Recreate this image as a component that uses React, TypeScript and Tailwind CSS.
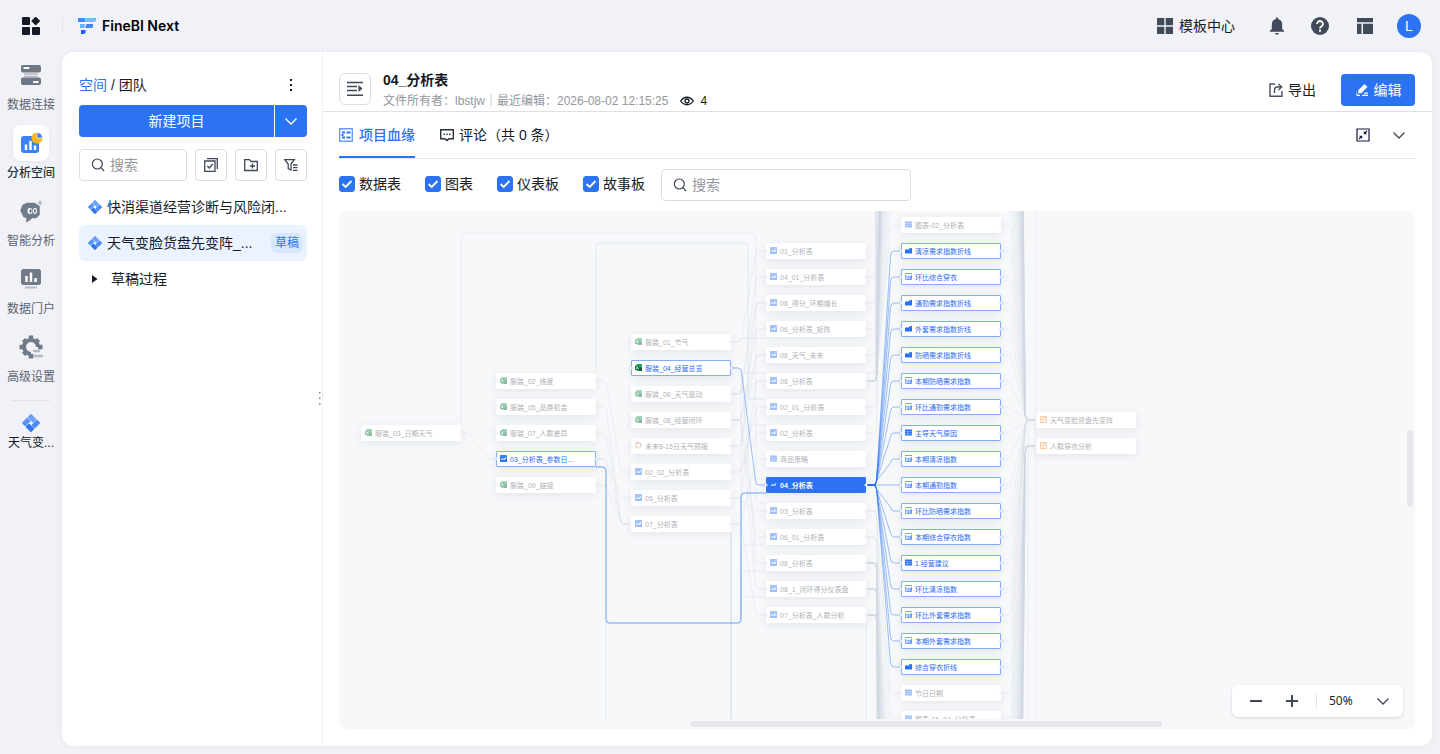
import { useState } from "react";
import type { ReactNode } from "react";

type NodeIcon = "excel" | "sheet" | "ring" | "list" | "area" | "kpi" | "board";
type NodeState = "dim" | "linked" | "active";

type GraphNode = {
  col: number;
  y: number;
  label: string;
  icon: NodeIcon;
  state: NodeState;
};

const NODE_W = 100;
const NODE_H = 16;
const COL_GAP = 135;
const ROW_GAP = 26;
const FIRST_X = 22;

const colX = (col: number) => FIRST_X + col * COL_GAP;

// y is the vertical middle of the first node in the column
function column(col: number, y: number, rows: [NodeIcon, string, NodeState?][]): GraphNode[] {
  return rows.map(([icon, label, state], i) => ({
    col,
    y: y + i * ROW_GAP,
    label,
    icon,
    state: state ?? "dim",
  }));
}

const nodes: GraphNode[] = [
  ...column(0, 222, [["excel", "服装_03_日期天气"]]),
  ...column(1, 170, [
    ["excel", "服装_02_维度"],
    ["excel", "服装_05_品类机会"],
    ["excel", "服装_07_人群差异"],
    ["sheet", "03_分析表_参数日...", "linked"],
    ["excel", "服装_09_链接"],
  ]),
  ...column(2, 131, [
    ["excel", "服装_01_节气"],
    ["excel", "服装_04_经营总览", "linked"],
    ["excel", "服装_06_天气驱动"],
    ["excel", "服装_08_经营闭环"],
    ["ring", "未来8-15日天气预报"],
    ["sheet", "02_02_分析表"],
    ["sheet", "05_分析表"],
    ["sheet", "07_分析表"],
  ]),
  ...column(3, 40, [
    ["sheet", "01_分析表"],
    ["sheet", "04_01_分析表"],
    ["sheet", "08_得分_环期增长"],
    ["sheet", "06_分析表_矩阵"],
    ["sheet", "08_天气_未来"],
    ["sheet", "06_分析表"],
    ["sheet", "02_01_分析表"],
    ["sheet", "02_分析表"],
    ["list", "商品策略"],
    ["sheet", "04_分析表", "active"],
    ["sheet", "03_分析表"],
    ["sheet", "06_01_分析表"],
    ["sheet", "08_分析表"],
    ["sheet", "08_1_闭环得分仪表盘"],
    ["sheet", "07_分析表_人群分析"],
  ]),
  ...column(4, 14, [
    ["list", "图表-02_分析表"],
    ["area", "清凉需求指数折线", "linked"],
    ["kpi", "环比综合穿衣", "linked"],
    ["area", "通勤需求指数折线", "linked"],
    ["area", "外套需求指数折线", "linked"],
    ["area", "防晒需求指数折线", "linked"],
    ["kpi", "本期防晒需求指数", "linked"],
    ["kpi", "环比通勤需求指数", "linked"],
    ["list", "主导天气原因", "linked"],
    ["kpi", "本期清凉指数", "linked"],
    ["kpi", "本期通勤指数", "linked"],
    ["kpi", "环比防晒需求指数", "linked"],
    ["kpi", "本期综合穿衣指数", "linked"],
    ["list", "1.经营建议", "linked"],
    ["kpi", "环比清凉指数", "linked"],
    ["kpi", "环比外套需求指数", "linked"],
    ["kpi", "本期外套需求指数", "linked"],
    ["area", "综合穿衣折线", "linked"],
    ["list", "节日日期"],
    ["list", "图表-06_04_分析表"],
  ]),
  ...column(5, 209, [
    ["board", "天气变脸货盘先变阵"],
    ["board", "人群穿衣分析"],
  ]),
];

type Edge = { d: string; tone: "faint" | "bundle" | "soft" | "mid" | "blue" | "main" };

// leaves the right side of one column, bends, and lands on the left of the next
function link(col: number, y1: number, y2: number) {
  const x1 = colX(col) + NODE_W;
  const x2 = colX(col + 1);
  if (y1 === y2) return `M${x1} ${y1}H${x2}`;
  const s = y2 > y1 ? 1 : -1;
  return `M${x1} ${y1}H${x1 + 7}Q${x1 + 10} ${y1} ${x1 + 10.5} ${y1 + 4 * s}L${x2 - 10.5} ${y2 - 4 * s}Q${x2 - 10} ${y2} ${x2 - 7} ${y2}H${x2}`;
}

const edges: Edge[] = [];
const add = (tone: Edge["tone"], col: number, pairs: [number, number][]) =>
  pairs.forEach(([a, b]) => edges.push({ tone, d: link(col, a, b) }));

add("mid", 0, [[222, 248]]);
add("faint", 1, [[170, 261], [196, 313], [222, 313], [274, 313]]);
add("mid", 1, [[248, 287], [248, 313]]);
add("faint", 2, [
  [131, 40], [183, 66], [183, 92], [183, 170], [209, 118], [209, 144], [209, 326],
  [235, 92], [235, 144], [261, 222], [261, 196], [287, 170], [287, 300], [313, 248], [313, 404],
  [157, 352], [209, 378],
]);
add("blue", 2, [[157, 274]]);
add("faint", 3, [
  [66, -200], [92, -260], [118, -300], [144, -340], [170, 14], [170, -420], [196, -400], [222, -480],
  [300, 482], [300, 700], [326, 508], [326, 760], [352, 900], [378, 1000], [404, 1200],
]);

// charts scrolled out of view above and below the visible part
for (let i = 0; i < 44; i++) {
  edges.push({ tone: "bundle", d: link(3, 170, -12 - i * ROW_GAP) });
  edges.push({ tone: "bundle", d: link(3, 352 + (i % 3) * 26, 534 + i * ROW_GAP) });
  edges.push({ tone: "bundle", d: link(4, -12 - i * ROW_GAP, 209) });
  edges.push({ tone: "bundle", d: link(4, 534 + i * ROW_GAP, 235) });
}
for (let i = 0; i < 20; i++) {
  edges.push({ tone: "faint", d: link(4, 14 + i * ROW_GAP, i > 17 ? 235 : 209) });
  if (i > 0 && i < 18) edges.push({ tone: "blue", d: link(3, 274, 14 + i * ROW_GAP) });
}

const longEdges: Edge[] = [
  { tone: "faint", d: "M122 214V26Q122 22 126 22H413Q417 22 417 26V288Q417 292 421 292H427" },
  { tone: "mid", d: "M257 162V36Q257 32 261 32H405Q409 32 409 36V184Q409 188 413 188H427" },
  { tone: "faint", d: "M392 131H398Q402 131 402 127H427" },
  { tone: "faint", d: "M402 280V166Q402 162 406 162H427M409 240V218Q409 214 413 214H427" },
  { tone: "faint", d: "M402 408V338Q402 334 406 334H427M402 408V364Q402 360 406 360H427M402 408V390Q402 386 406 386H427" },
  { tone: "mid", d: "M267 412V508" },
  { tone: "soft", d: "M392 321V508" },
  { tone: "mid", d: "M527 412V508" },
  { tone: "faint", d: "M697 0V508M689 209V508" },
  { tone: "faint", d: "M527 162H533Q537 162 537 158V0" },
  { tone: "soft", d: "M527 170H537V0M687 209H697M687 235H697M527 352H535Q538 352 538 356V508M527 378H538M527 404H538" },
  { tone: "blue", d: "M257 256H263Q267 256 267 260V408Q267 412 271 412H398Q402 412 402 408V286Q402 282 406 282H427" },
  { tone: "main", d: "M527 274H537" },
];

const strokeFor = {
  faint: "stroke-[#d3d8e2] opacity-35",
  bundle: "stroke-[#d4dce6] opacity-25",
  mid: "stroke-[#d6d9df] opacity-35",
  soft: "stroke-[#d6dae2] stroke-2 opacity-55",
  blue: "stroke-[#2b73f2] opacity-45",
  main: "stroke-[#2b73f2] stroke-2",
};

const glyph = "mt-[3px] size-[7px] shrink-0";

function NodeGlyph({ icon, active }: { icon: NodeIcon; active: boolean }) {
  switch (icon) {
    case "excel":
      return (
        <svg viewBox="0 0 14 14" className={glyph}>
          <rect x="3" y="0" width="11" height="14" rx="1.500" fill="#21a366" />
          <rect x="8" y="7" width="6" height="7" fill="#185c37" />
          <rect x="0" y="3" width="9" height="9" rx="1" fill="#107c41" />
          <path d="M2.500 5l4 5M6.500 5l-4 5" stroke="#fff" strokeWidth="1.300" />
        </svg>
      );
    case "sheet":
      return (
        <svg viewBox="0 0 14 14" className={glyph}>
          <rect width="14" height="14" rx="1" fill="#2b73f2" />
          {!active && <path d="M0 2h14" stroke="#6b9df6" />}
          <path d="M2 10l3-4 2 4 4-5M9 10l3-5" stroke="#fff" strokeWidth="1.600" fill="none" />
        </svg>
      );
    case "ring":
      return (
        <svg viewBox="0 0 14 14" className={glyph} fill="none" strokeWidth="2.500">
          <path d="M7 12a5 5 0 0 1-5-5V3" stroke="#f59b4b" />
          <path d="M2 3q3-3 7-1" stroke="#e45ab1" />
          <path d="M9 2q4 2 3 6" stroke="#7b7cf0" />
          <path d="M12 8q-1 4-5 4" stroke="#f2c94c" />
        </svg>
      );
    case "list":
      return (
        <svg viewBox="0 0 14 14" className={glyph}>
          <rect y="1" width="14" height="12" fill="#2b73f2" />
          <path d="M0 5h14M0 9h14M5 5v8" stroke="#a9c6fb" />
        </svg>
      );
    case "area":
      return (
        <svg viewBox="0 0 14 14" className={glyph}>
          <path d="M0 13V6l3-2 3 2 3-4 2 1 3-2v12z" fill="#2b73f2" />
        </svg>
      );
    case "kpi":
      return (
        <svg viewBox="0 0 14 14" className={glyph} fill="none" stroke="#2b73f2" strokeWidth="1.300">
          <path d="M0 1h14M1 4v9h12V4M3 6.500h1.500V11M6 6.500h2v4.500H6M9.500 6.500h2v4.500h-2M9.500 8.700h2" />
        </svg>
      );
    case "board":
      return (
        <svg viewBox="0 0 14 14" className={glyph} fill="none" stroke="#f5832a" strokeWidth="1.800">
          <path d="M1 1h12v12H1zM1 6h5l2 2h5M7 1v6M5 9v4M9 3h3" />
        </svg>
      );
  }
}

function LineageNode({ node }: { node: GraphNode }) {
  const look = {
    dim: "border-white bg-white text-[#4b5160]",
    linked: "border-[#86aef8] bg-white text-[#2b6bf0]",
    active: "border-[#2b73f2] bg-[#2b73f2] font-bold text-white",
  }[node.state];
  return (
    <div
      className={`absolute h-4 w-[100px] rounded-[1px] border pl-[3px] shadow-[0_2px_8px_rgba(30,40,80,0.09)] ${look}`}
      style={{ left: colX(node.col), top: node.y - NODE_H / 2 }}
    >
      <div className={`flex items-start gap-[3px] ${node.state === "dim" ? "opacity-45" : ""}`}>
        <NodeGlyph icon={node.icon} active={node.state === "active"} />
        <span className="text-[7px] leading-4 whitespace-nowrap">{node.label}</span>
      </div>
    </div>
  );
}

function Lineage() {
  return (
    <div className="relative min-h-[518px] flex-1 overflow-hidden rounded-lg bg-[#f6f8fa]">
      <div className="absolute inset-x-0 top-0 bottom-2.5 overflow-hidden">
        <svg className="absolute inset-0 size-full" fill="none">
          {edges.filter((e) => e.tone !== "blue").map((e, i) => (
            <path key={i} d={e.d} className={strokeFor[e.tone]} />
          ))}
        </svg>
        {nodes.map((n) => (
          <LineageNode key={n.col + n.label} node={n} />
        ))}
        <svg className="pointer-events-none absolute inset-0 size-full" fill="none">
          {longEdges.map((e, i) => (
            <path key={i} d={e.d} strokeWidth={e.tone === "faint" ? 1 : 1.5} className={strokeFor[e.tone]} />
          ))}
          {edges.filter((e) => e.tone === "blue").map((e, i) => (
            <path key={i} d={e.d} className={strokeFor.blue} />
          ))}
          {nodes.map((n) => (
            <g key={n.col + n.label} className={n.state === "dim" ? "stroke-[#e3e6eb]" : "stroke-[#b9cff8]"} fill="#fff" strokeWidth="0.600">
              {n.col > 0 && <circle cx={colX(n.col)} cy={n.y} r="1.300" />}
              {n.col < 5 && <circle cx={colX(n.col) + NODE_W} cy={n.y} r="1.300" />}
            </g>
          ))}
        </svg>
      </div>

      <div className="absolute top-[219px] right-0.5 h-[77px] w-1.5 rounded-full bg-[#e6e8ec]" />
      <div className="absolute bottom-0.5 left-[352px] h-1.5 w-[471px] rounded-full bg-[#e6e8ec]" />

      <div className="absolute right-3 bottom-3 flex h-8 w-[171px] items-center rounded-md bg-white pl-3 text-[#3f4856] shadow-[0_1px_3px_rgba(20,30,60,0.15)]">
        <button aria-label="缩小" className="flex h-6 w-6 items-center justify-center">
          <svg viewBox="0 0 14 14" className="size-3.5" stroke="currentColor" strokeWidth="2"><path d="M1 7h12" /></svg>
        </button>
        <button aria-label="放大" className="ml-3 flex h-6 w-6 items-center justify-center">
          <svg viewBox="0 0 14 14" className="size-3.5" stroke="currentColor" strokeWidth="2"><path d="M1 7h12M7 1v12" /></svg>
        </button>
        <span className="ml-3 h-4 w-px bg-[#e2e5ec]" />
        <label className="relative flex flex-1 items-center">
          <select
            aria-label="缩放比例"
            defaultValue="50%"
            className="h-8 w-full appearance-none bg-transparent pl-3 font-['Noto_Sans',sans-serif] text-xs text-[#1c2434] outline-none"
          >
            <option>50%</option>
            <option>100%</option>
          </select>
          <Chevron className="pointer-events-none absolute right-3.5 size-3" />
        </label>
      </div>
    </div>
  );
}

function Chevron({ className }: { className: string }) {
  return (
    <svg viewBox="0 0 12 12" className={className} fill="none" stroke="currentColor" strokeWidth="1.300">
      <path d="M0.500 3.500L6 9l5.500-5.500" />
    </svg>
  );
}

// four bars turning round a small square hole
function ProjectIcon({ className }: { className: string }) {
  return (
    <svg viewBox="0 0 18 18" className={className}>
      <g transform="rotate(45 9 9)">
        <rect x="2.400" y="2.400" width="7.900" height="5.100" rx="0.800" fill="#6ba0fb" />
        <rect x="10.700" y="2.400" width="4.900" height="7.900" rx="0.800" fill="#4a8af9" />
        <rect x="7.900" y="10.700" width="7.700" height="4.900" rx="0.800" fill="#2f74f3" />
        <rect x="2.400" y="7.900" width="5.100" height="7.700" rx="0.800" fill="#5a94fa" />
      </g>
    </svg>
  );
}

function SearchBox({ className, label }: { className: string; label: string }) {
  return (
    <label className={`flex h-8 items-center gap-[5px] rounded border border-[#d9dde6] bg-white pl-[11px] text-[#3f4856] ${className}`}>
      <svg viewBox="0 0 14 14" className="size-3.5 shrink-0" fill="none" stroke="currentColor" strokeWidth="1.200">
        <circle cx="6.300" cy="6" r="5" />
        <path d="M10 9.700l3 3.300" />
      </svg>
      <input aria-label={label} placeholder="搜索" className="w-full min-w-0 bg-transparent text-sm outline-none placeholder:text-[#9297a0]" />
    </label>
  );
}

const navItems: { label: string; icon: ReactNode }[] = [
  {
    label: "数据连接",
    icon: (
      <svg viewBox="0 0 22 22" className="size-[22px]">
        <rect x="1" y="1" width="20" height="7.500" rx="2" fill="#6d7785" />
        <rect x="3.500" y="3" width="6" height="2" rx=".5" fill="#fff" />
        <path d="M4 10h14M4 12.500h14" fill="none" stroke="#b6bbc4" strokeWidth="1.600" />
        <rect x="1" y="13.500" width="20" height="7.500" rx="2" fill="#6d7785" />
        <rect x="13" y="17" width="5.500" height="2" rx=".5" fill="#fff" />
      </svg>
    ),
  },
  {
    label: "分析空间",
    icon: (
      <svg viewBox="0 0 24 24" className="size-6">
        <rect x="2" y="5" width="18" height="17" rx="3" fill="#3b82f6" />
        <path d="M7 13.500v5.500M11.500 10v9M16 14.500v4.500" stroke="#fff" strokeWidth="2.500" />
        <circle cx="18" cy="7" r="5.500" fill="#fcb519" />
        <path d="M18 7V1.500A5.500 5.500 0 0 1 23.500 7z" fill="#3b82f6" stroke="#fff" strokeWidth="0.600" />
      </svg>
    ),
  },
  {
    label: "智能分析",
    icon: (
      <svg viewBox="0 0 24 24" className="size-6">
        <path d="M8 4.500h7.500l4.500 3v8l-3 3h-4l-5 4v-4l-3-1-3-6 2-5z" fill="#717b89" stroke="#717b89" strokeLinejoin="round" strokeWidth="1.500" />
        <ellipse cx="11" cy="12" rx="2.500" ry="3" fill="#fff" />
        <ellipse cx="16" cy="12" rx="2" ry="3" fill="#fff" />
        <ellipse cx="11.500" cy="12" rx="1" ry="2" fill="#59626f" />
        <ellipse cx="16" cy="12" rx="0.800" ry="2" fill="#59626f" />
        <path d="M21 .500l.8 2.700 2.200.8-2.200.8L21 7.500l-.8-2.700L18 4l2.200-.8z" fill="#a9afb9" />
      </svg>
    ),
  },
  {
    label: "数据门户",
    icon: (
      <svg viewBox="0 0 22 22" className="size-[22px]">
        <rect x="1" y="1" width="20" height="16" rx="2.500" fill="#707a88" />
        <path d="M6.500 8v6M11 4.500V14M15.500 10v4" stroke="#fff" strokeWidth="2.500" />
        <path d="M5 19.500h12" stroke="#b6bbc4" strokeWidth="2" />
      </svg>
    ),
  },
  {
    label: "高级设置",
    icon: (
      <svg viewBox="0 0 24 24" className="size-6" fill="none">
        <path d="M19 12a7 7 0 1 0-7 7" stroke="#707a88" strokeWidth="4" />
        <path d="M12 .500v4M4.500 4.500l3 3M.500 12h4M4.500 19.500l3-3M19.500 4.500l-3 3M23.500 12H19M12 19v4.500" stroke="#707a88" strokeWidth="4.500" />
        <path d="M14 16h7M14 21h10" stroke="#b6bbc4" strokeWidth="2.500" />
      </svg>
    ),
  },
];

function SideNav() {
  return (
    <nav className="flex w-[62px] shrink-0 flex-col items-center gap-2 pt-[5px]">
      {navItems.map((item, i) => (
        <a key={item.label} href="#" className="flex flex-col items-center">
          <span className={`flex size-9 items-center justify-center rounded-lg ${i === 1 ? "bg-white shadow-[0_1px_4px_rgba(30,40,80,0.06)]" : ""}`}>
            {item.icon}
          </span>
          <span className={`text-xs leading-6 ${i === 1 ? "font-medium text-[#2c3340]" : "text-[#5b6270]"}`}>{item.label}</span>
        </a>
      ))}
      <div className="mt-[3px] h-px w-[38px] bg-[#e0e2e8]" />
      <a href="#" className="mt-[5px] flex flex-col items-center text-xs leading-[22px] text-[#141a26]">
        <ProjectIcon className="size-[18px]" />
        天气变...
      </a>
    </nav>
  );
}

function TopBar() {
  return (
    <header className="flex h-[52px] shrink-0 items-center">
      <button aria-label="应用" className="flex w-[62px] justify-center">
        <svg viewBox="0 0 18 18" className="size-[18px]" fill="#141a26">
          <rect width="8" height="8" rx="1" />
          <rect y="10" width="8" height="8" rx="1" />
          <rect x="10" y="10" width="8" height="8" rx="1" />
          <path d="M13.700-.5L18.300 4l-4.600 4.500L9.200 4z" />
        </svg>
      </button>
      <span className="h-4 w-px bg-[#e1e3ea]" />
      <div className="ml-[15px] flex items-center gap-1.5">
        <svg viewBox="0 0 18 16" className="h-4 w-[18px]">
          <path d="M0 0h7v4H0z" fill="#3f8cf8" />
          <path d="M8 0h10v2.500L16.500 4H7V2z" fill="#6fc0f2" />
          <path d="M2 6h5L6 10H2z" fill="#62b2f6" />
          <path d="M8.500 6H15v3l-1 1H7z" fill="#3f86f8" />
          <path d="M3 12h4.500v2.500L6 16H3z" fill="#1f5df0" />
        </svg>
        <span className="font-['Inter',sans-serif] text-sm leading-4 font-semibold text-black">FineBI Next</span>
      </div>
      <div className="ml-auto flex items-center pr-[19px] text-[#414a59]">
        <a href="#" className="flex items-center gap-1.5 text-sm text-[#141a26]">
          <svg viewBox="0 0 16 16" className="size-4" fill="#414a59">
            <path d="M0 0h7.300v7.300H0zM8.700 0H16v7.300H8.700zM0 8.700h7.300V16H0zM8.700 8.700H16V16H8.700z" />
          </svg>
          模板中心
        </a>
        <button aria-label="通知" className="ml-[33px]">
          <svg viewBox="0 0 18 18" className="size-[18px]" fill="currentColor">
            <path d="M8 .5h2v1.600c2.600.5 4.200 2.600 4.200 5.300V12l2 2v.8H1.800V14l2-2V7.400c0-2.700 1.600-4.800 4.200-5.300zM7 16h4c-.2 1-1 1.600-2 1.600S7.200 17 7 16z" />
          </svg>
        </button>
        <button aria-label="帮助" className="ml-[25px]">
          <svg viewBox="0 0 18 18" className="size-[18px]">
            <circle cx="9" cy="9" r="9" fill="#414a59" />
            <path d="M6.100 7a2.900 2.900 0 1 1 4.500 2.300c-1 .7-1.600 1-1.600 2.100" fill="none" stroke="#fff" strokeWidth="1.900" />
            <rect x="8" y="12.700" width="2" height="2" fill="#fff" />
          </svg>
        </button>
        <button aria-label="布局" className="ml-7">
          <svg viewBox="0 0 16 16" className="size-4" fill="currentColor">
            <path d="M0 0h16v4.200H0zM0 5.800h4.500V16H0zM6 5.800h10V16H6z" />
          </svg>
        </button>
        <button className="ml-6 size-6 rounded-full bg-[#2b73f2] text-sm leading-6 text-white">L</button>
      </div>
    </header>
  );
}

const toolBtn = "flex size-8 items-center justify-center rounded border border-[#d9dde6] text-[#3f4856]";

function ProjectPanel() {
  return (
    <aside className="relative flex w-[261px] shrink-0 flex-col border-r border-[#eef0f4] pt-[17px] pr-[15px] pl-[17px] text-sm text-[#141a26]">
      <div className="flex h-8 items-center">
        <a href="#" className="text-[#2b73f2]">空间</a>
        <span className="whitespace-pre"> / 团队</span>
        <button aria-label="更多" className="mr-[9px] ml-auto flex w-3.5 justify-center">
          <svg viewBox="0 0 14 14" className="size-3.5" fill="currentColor">
            <path d="M6 1h2v2H6zM6 6h2v2H6zM6 11h2v2H6z" />
          </svg>
        </button>
      </div>
      <div className="mt-1 flex h-8 gap-px text-white">
        <button className="flex-1 rounded-l bg-[#2b73f2]">新建项目</button>
        <button aria-label="更多新建方式" className="flex w-8 items-center justify-center rounded-r bg-[#2b73f2]">
          <Chevron className="size-3" />
        </button>
      </div>
      <div className="mt-3 flex gap-2">
        <SearchBox label="搜索项目" className="w-[108px]" />
        <button aria-label="批量选择" className={toolBtn}>
          <svg viewBox="0 0 14 14" className="size-3.5" fill="none" stroke="currentColor" strokeWidth="1.300">
            <path d="M.7 3h10.300v10.300H.7zM3 .7h10.300V11M3.300 8l2 2 3.500-4" />
          </svg>
        </button>
        <button aria-label="新建文件夹" className={toolBtn}>
          <svg viewBox="0 0 14 14" className="size-3.5" fill="none" stroke="currentColor" strokeWidth="1.300">
            <path d="M.7 1.700h4.800L7 3.500h6.300v9H.7zM8.500 5.500v5M6 8h5" />
          </svg>
        </button>
        <button aria-label="筛选" className={toolBtn}>
          <svg viewBox="0 0 14 14" className="size-3.5" fill="none" stroke="currentColor" strokeWidth="1.300">
            <path d="M.7 1.700h9.600L7 6v6L4.200 10.500V6zM9 7h4.500M9 9.700h4.500M9 12.400h4.500" />
          </svg>
        </button>
      </div>
      <ul className="mt-2">
        <li className="flex h-9 items-center gap-[5px] pl-[9px]">
          <ProjectIcon className="size-3.5" />
          <span>快消渠道经营诊断与风险闭...</span>
        </li>
        <li className="flex h-9 items-center gap-[5px] rounded-md bg-[#eaf3ff] pr-1 pl-[9px]">
          <ProjectIcon className="size-3.5" />
          <span>天气变脸货盘先变阵_...</span>
          <span className="ml-auto rounded-md bg-[#d9e7fe] px-1 text-xs leading-5 text-[#2b73f2]">草稿</span>
        </li>
        <li className="flex h-9 items-center pl-3">
          <svg viewBox="0 0 8 10" className="h-2.5 w-2" fill="currentColor"><path d="M1 1l5.500 4L1 9z" /></svg>
          <span className="ml-3">草稿过程</span>
        </li>
      </ul>
      <svg viewBox="0 0 2 14" className="absolute top-[339px] right-px h-3.5 w-0.5" fill="#7d838f">
        <path d="M0 1h1.500v1.500H0zM0 6.500h1.500V8H0zM0 12h1.500v1.500H0z" />
      </svg>
    </aside>
  );
}

function DetailHeader() {
  return (
    <div className="flex h-[60px] shrink-0 items-start border-b border-[#dcdfe6] pr-[17px] pl-4">
      <button aria-label="展开目录" className="mt-[21px] flex size-8 items-center justify-center rounded-md border border-[#d9dde6] text-[#3f4856]">
        <svg viewBox="0 0 16 16" className="size-4" stroke="currentColor" strokeWidth="1.500">
          <path d="M0 1.500h16M0 5.500h10M0 9.500h10M0 14.200h16" />
          <path d="M11.500 4l4 3.500-4 3.500z" fill="currentColor" stroke="none" />
        </svg>
      </button>
      <div className="mt-[17px] ml-3">
        <h1 className="text-sm leading-[22px] font-bold text-[#141a26]">04_分析表</h1>
        <div className="flex items-center text-xs leading-5 text-[#9297a0]">
          <span>文件所有者：lbstjw｜最近编辑：2026-08-02 12:15:25</span>
          <svg viewBox="0 0 14 14" className="ml-3 size-3.5 text-[#141a26]" fill="none" stroke="currentColor" strokeWidth="1.300">
            <path d="M.7 7c3.400-5 9.200-5 12.600 0-3.400 5-9.200 5-12.600 0z" />
            <circle cx="7" cy="7" r="2" />
          </svg>
          <span className="ml-1.5 text-[#141a26]">4</span>
        </div>
      </div>
      <div className="mt-[22px] ml-auto flex items-center gap-[25px] text-sm">
        <button className="flex items-center gap-[5px] text-[#141a26]">
          <svg viewBox="0 0 14 14" className="size-3.5" fill="none" stroke="#4a5260" strokeWidth="1.400">
            <path d="M6 1H1v12.300h12V8M5.500 10V7q0-3 3-3h4M9.500 1l3.200 3-3.200 3" />
          </svg>
          导出
        </button>
        <button className="flex h-8 w-[74px] items-center justify-center gap-[5px] rounded bg-[#2b73f2] text-white">
          <svg viewBox="0 0 14 14" className="size-3.5" fill="currentColor">
            <path d="M9.500 1l3 3-6.300 6.300H3.200V7.300zM1.500 8.500V13H5v-1.200H2.700zM7 11.800h6V13H7zM9.500 9.500H13v1.200H8.500z" />
          </svg>
          编辑
        </button>
      </div>
    </div>
  );
}

function Tabs() {
  const [tab, setTab] = useState("lineage");
  const line = (on: boolean) => (on ? "border-[#2b73f2] font-medium text-[#2b73f2]" : "border-transparent text-[#141a26]");
  return (
    <div className="flex h-[47px] shrink-0 items-stretch gap-[25px] border-b border-[#e4e7ed] text-sm">
      <button onClick={() => setTab("lineage")} className={`flex items-center gap-1.5 border-b-2 pt-0.5 ${line(tab === "lineage")}`}>
        <svg viewBox="0 0 14 14" className="size-3.5" fill="none" stroke="currentColor">
          <path d="M.7.7h12.600v12.600H.7z" strokeWidth="1.400" opacity=".7" />
          <path d="M3 4.500h3M7.500 4.500h4M3 9.500h3M7.500 9.500h4M2.500 7h2" strokeWidth="2" />
        </svg>
        项目血缘
      </button>
      <button onClick={() => setTab("comments")} className={`flex items-center gap-[5px] border-b-2 pt-0.5 ${line(tab === "comments")}`}>
        <svg viewBox="0 0 14 14" className="size-3.5" fill="none" stroke="#2a303c" strokeWidth="1.400">
          <path d="M.7 1.700h12.600v9H9L7 12.500l-2-1.800H.7z" />
          <path d="M3.500 6.200h1.400M6.300 6.200h1.400M9.100 6.200h1.400" />
        </svg>
        评论（共 0 条）
      </button>
      <div className="ml-auto flex items-center text-[#3f4856]">
        <button aria-label="退出全屏">
          <svg viewBox="0 0 14 14" className="size-3.5 text-[#141a40]" fill="none" stroke="currentColor" strokeWidth="1.200">
            <path d="M1 1h12v12H1zM11 3L8.500 5.500M3 11l2.500-2.500" />
            <path d="M7.800 3v3.200H11zM6.200 11V7.800H3z" fill="currentColor" stroke="none" />
          </svg>
        </button>
        <button aria-label="收起" className="mr-2.5 ml-[23px]">
          <Chevron className="size-3" />
        </button>
      </div>
    </div>
  );
}

function Filters() {
  return (
    <div className="flex items-start gap-4 py-2.5 text-sm text-[#141a26]">
      <div className="flex gap-6">
        {["数据表", "图表", "仪表板", "故事板"].map((name) => (
          <label key={name} className="flex h-[30px] items-center gap-1">
            <span className="relative flex size-4">
              <input type="checkbox" defaultChecked className="peer size-4 appearance-none rounded-[3px] border border-[#c5cad5] checked:border-[#2b73f2] checked:bg-[#2b73f2]" />
              <svg viewBox="0 0 16 16" className="pointer-events-none absolute inset-0 hidden size-4 peer-checked:block" fill="none" stroke="#fff" strokeWidth="1.800">
                <path d="M3.500 8l3.200 3L12.500 5" />
              </svg>
            </span>
            {name}
          </label>
        ))}
      </div>
      <SearchBox label="搜索节点" className="w-[250px]" />
    </div>
  );
}

export default function App() {
  return (
    <div className="flex min-h-screen flex-col bg-[#f1f2f7] font-['Liberation_Sans','Noto_Sans_CJK_SC',sans-serif]">
      <TopBar />
      <div className="flex flex-1">
        <SideNav />
        <main className="mr-2 mb-2 flex min-w-0 flex-1 rounded-xl bg-white shadow-[0_0_6px_rgba(30,40,80,0.05)]">
          <ProjectPanel />
          <section className="flex min-w-0 flex-1 flex-col">
            <DetailHeader />
            <div className="flex flex-1 flex-col pr-[17px] pb-[17px] pl-4">
              <Tabs />
              <Filters />
              <Lineage />
            </div>
          </section>
        </main>
      </div>
    </div>
  );
}
